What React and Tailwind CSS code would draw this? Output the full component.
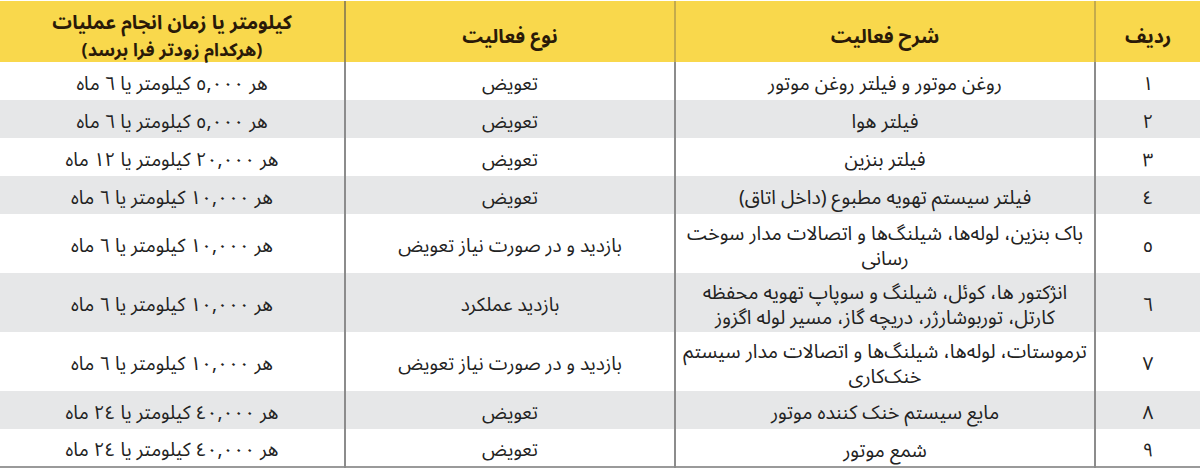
import React from "react";

const rows = [
  { n: "١", d: ["روغن موتور و فیلتر روغن موتور"], t: "تعویض", k: "هر ٥,٠٠٠ کیلومتر یا ٦ ماه" },
  { n: "٢", d: ["فیلتر هوا"], t: "تعویض", k: "هر ٥,٠٠٠ کیلومتر یا ٦ ماه" },
  { n: "٣", d: ["فیلتر بنزین"], t: "تعویض", k: "هر ٢٠,٠٠٠ کیلومتر یا ١٢ ماه" },
  { n: "٤", d: ["فیلتر سیستم تهویه مطبوع (داخل اتاق)"], t: "تعویض", k: "هر ١٠,٠٠٠ کیلومتر یا ٦ ماه" },
  { n: "٥", d: ["باک بنزین، لوله‌ها، شیلنگ‌ها و اتصالات مدار سوخت", "رسانی"], t: "بازدید و در صورت نیاز تعویض", k: "هر ١٠,٠٠٠ کیلومتر یا ٦ ماه" },
  { n: "٦", d: ["انژکتور ها، کوئل، شیلنگ و سوپاپ تهویه  محفظه", "کارتل، توربوشارژر، دریچه گاز، مسیر لوله اگزوز"], t: "بازدید عملکرد", k: "هر ١٠,٠٠٠ کیلومتر یا ٦ ماه" },
  { n: "٧", d: ["ترموستات، لوله‌ها، شیلنگ‌ها و اتصالات مدار سیستم", "خنک‌کاری"], t: "بازدید و در صورت نیاز تعویض", k: "هر ١٠,٠٠٠ کیلومتر یا ٦ ماه" },
  { n: "٨", d: ["مایع سیستم خنک کننده موتور"], t: "تعویض", k: "هر ٤٠,٠٠٠ کیلومتر یا ٢٤ ماه" },
  { n: "٩", d: ["شمع موتور"], t: "تعویض", k: "هر ٤٠,٠٠٠ کیلومتر یا ٢٤ ماه" },
];

export default function App() {
  return (
    <div
      className="w-[1200px] h-[475px] bg-white pt-[1px]"
      style={{ fontFamily: '"Noto Sans Arabic", "DejaVu Sans", sans-serif' }}
    >
      <table dir="rtl" className="w-[1200px] border-collapse table-fixed text-[#222]">
        <colgroup>
          <col className="w-[105px]" />
          <col className="w-[420px]" />
          <col className="w-[330px]" />
          <col className="w-[345px]" />
        </colgroup>
        <thead>
          <tr className="bg-[#f9d84c] h-[61px] text-[#2a1a08]">
            <th className="font-bold text-[19.5px] leading-[28px] pt-[10px] border-l-2 border-[#c4ab4c]">ردیف</th>
            <th className="font-bold text-[19.5px] leading-[28px] pt-[10px] border-l-2 border-[#c4ab4c]">شرح فعالیت</th>
            <th className="font-bold text-[19.5px] leading-[28px] pt-[10px] border-l-2 border-[#9a8a50]">نوع فعالیت</th>
            <th className="font-bold p-0 align-top">
              <div className="h-[61px] pt-[7px]">
                <div className="text-[19.5px] leading-[30px]">کیلومتر یا زمان انجام عملیات</div>
                <div className="text-[18px] leading-[22px] mt-[1px]">(هرکدام زودتر فرا برسد)</div>
              </div>
            </th>
          </tr>
        </thead>
        <tbody>
          {rows.map((r, i) => {
            const two = r.d.length > 1;
            return (
              <tr
                key={i}
                className={`${i % 2 === 1 ? "bg-[#e6e7e8]" : "bg-white"} ${two ? "h-[59px]" : "h-[38px]"} ${i === rows.length - 1 ? "border-b-2 border-[#9a9a9a]" : ""}`}
              >
                <td className="text-center text-[19px] leading-[26px] pt-[5px] border-l-2 border-[#8c8c8c]">{r.n}</td>
                <td className="text-center text-[19.5px] leading-[25px] pt-[5px] border-l-2 border-[#8c8c8c] whitespace-nowrap">
                  {r.d.map((l, j) => (
                    <div key={j}>{l}</div>
                  ))}
                </td>
                <td className="text-center text-[19px] leading-[26px] pt-[5px] border-l-2 border-[#8c8c8c]">{r.t}</td>
                <td className="text-center text-[19px] leading-[26px] pt-[5px]">{r.k}</td>
              </tr>
            );
          })}
        </tbody>
      </table>
    </div>
  );
}
